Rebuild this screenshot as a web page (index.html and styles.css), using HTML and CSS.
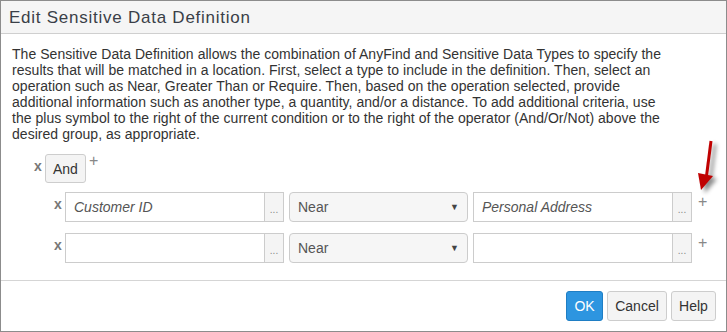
FILE: index.html
```html
<!DOCTYPE html>
<html lang="en">
    <head>
        <meta charset="utf-8">
        <title>Edit Sensitive Data Definition</title>
        <link rel="stylesheet" href="styles.css">
    </head>
    <body>
        <div class="dialog">
            <div class="dialog-header">Edit Sensitive Data Definition</div>

            <div class="dialog-body">
                <p class="intro">The Sensitive Data Definition allows the combination of AnyFind and Sensitive Data Types to specify the<br>
                results that will be matched in a location. First, select a type to include in the definition. Then, select an<br>
                operation such as Near, Greater Than or Require. Then, based on the operation selected, provide<br>
                additional information such as another type, a quantity, and/or a distance. To add additional criteria, use<br>
                the plus symbol to the right of the current condition or to the right of the operator (And/Or/Not) above the<br>
                desired group, as appropriate.</p>

                <div class="op-row">
                    <span class="remove">x</span>
                    <button class="btn op-btn">And</button>
                    <span class="add add-op">+</span>
                </div>

                <div class="cond-row">
                    <span class="remove">x</span>
                    <div class="picker">
                        <span class="picker-value">Customer ID</span>
                        <span class="picker-more">...</span>
                    </div>
                    <div class="select">
                        <span>Near</span>
                        <span class="caret">&#9660;</span>
                    </div>
                    <div class="picker">
                        <span class="picker-value">Personal Address</span>
                        <span class="picker-more">...</span>
                    </div>
                    <span class="add">+</span>
                </div>

                <div class="cond-row">
                    <span class="remove">x</span>
                    <div class="picker">
                        <span class="picker-value"></span>
                        <span class="picker-more">...</span>
                    </div>
                    <div class="select">
                        <span>Near</span>
                        <span class="caret">&#9660;</span>
                    </div>
                    <div class="picker">
                        <span class="picker-value"></span>
                        <span class="picker-more">...</span>
                    </div>
                    <span class="add">+</span>
                </div>
            </div>

            <div class="dialog-footer">
                <button class="btn btn-primary btn-ok">OK</button>
                <button class="btn btn-cancel">Cancel</button>
                <button class="btn btn-help">Help</button>
            </div>

            <!-- callout arrow pointing at the condition's plus -->
            <svg class="callout" width="30" height="56" viewBox="0 0 30 56">
                <line x1="19" y1="1" x2="14.5" y2="36" stroke="#c00000" stroke-width="3"/>
                <polygon points="6,33 21,36 9,50" fill="#c00000"/>
            </svg>
        </div>
    </body>
</html>
```

FILE: styles.css
```css
body {
    margin: 0;
    background: #fff;
    font-family: "Liberation Sans", Arial, Helvetica, sans-serif;
    color: #333;
}

.dialog {
    position: relative;
    width: 725px;
    height: 330px;
    border: 1px solid #8c8c8c;
    display: flex;
    flex-direction: column;
    overflow: hidden;
}

.dialog-header {
    height: 32px;
    line-height: 33px;
    padding-left: 8px;
    background: #f5f5f5;
    border-bottom: 1px solid #cfcfcf;
    font-size: 17px;
    letter-spacing: 0.75px;
    color: #3a3f48;
}

.dialog-body {
    flex: 1;
    padding: 12px 4px 0 11px;
}

.intro {
    margin: 0;
    font-size: 14px;
    letter-spacing: 0.04px;
    line-height: 16px;
    white-space: nowrap;
    color: #333;
}

.op-row {
    display: flex;
    align-items: flex-start;
    margin-top: 12px;
    padding-left: 22px;
    height: 28px;
}

.cond-row {
    display: flex;
    align-items: flex-start;
    padding-left: 42px;
    height: 30px;
    margin-top: 10px;
}

.cond-row + .cond-row {
    margin-top: 11px;
}

.remove {
    width: 11px;
    font-size: 14px;
    font-weight: bold;
    color: #777;
    line-height: 18px;
    padding-top: 3px;
}

.add {
    font-size: 16px;
    color: #888;
    line-height: 14px;
    margin-left: 1px;
    margin-top: 3px;
}

.add-op {
    margin-left: 3px;
    margin-top: 0;
}

.btn {
    height: 30px;
    padding: 0 8px;
    font-family: inherit;
    font-size: 14px;
    color: #333;
    background: #f4f4f4;
    border: 1px solid #cdcdcd;
    border-radius: 3px;
}

.op-btn {
    height: 29px;
    padding: 0 7px;
}

.btn-primary {
    color: #fff;
    background: #2d95e0;
    border-color: #1f7ec4;
}

.btn-ok {
    width: 37px;
    padding: 0;
}

.btn-cancel {
    width: 60px;
    padding: 0;
}

.btn-help {
    width: 45px;
    padding: 0;
}

.picker {
    display: flex;
    width: 217px;
    height: 28px;
    border: 1px solid #ccc;
    margin-right: 5px;
}

.picker-value {
    flex: 1;
    padding-left: 8px;
    line-height: 28px;
    font-size: 14px;
    font-style: italic;
    color: #555;
}

.picker-more {
    width: 18px;
    border-left: 1px solid #ccc;
    background: #f4f4f4;
    color: #888;
    font-size: 10px;
    text-align: center;
    line-height: 34px;
}

.select {
    display: flex;
    justify-content: space-between;
    width: 161px;
    height: 28px;
    padding: 0 8px 0 8px;
    border: 1px solid #ccc;
    border-radius: 4px;
    background: #f6f6f6;
    margin-right: 5px;
    line-height: 28px;
    font-size: 14px;
    color: #555;
}

.caret {
    font-size: 9px;
    color: #444;
}

.dialog-footer {
    display: flex;
    justify-content: flex-end;
    gap: 4px;
    padding: 10px 10px 10px 0;
    border-top: 1px solid #d5d5d5;
}

.callout {
    position: absolute;
    left: 691px;
    top: 139px;
    filter: drop-shadow(4px 3px 2px rgba(0, 0, 0, 0.45));
}
```
